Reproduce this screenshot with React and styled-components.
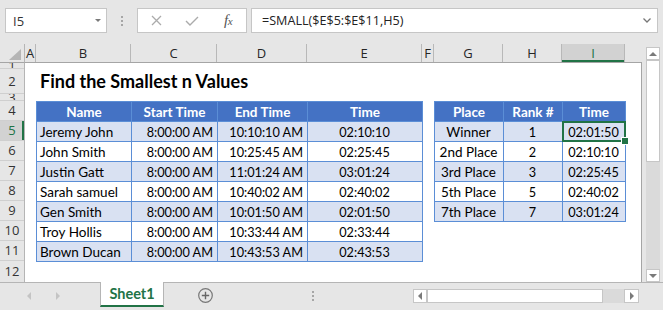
import React from 'react';
import styled, { createGlobalStyle } from 'styled-components';

const GREEN = '#217346';
const BLUE = '#4472C4';
const BAND = '#D9E1F2';
const TBORDER = '#5B8ED6';
const UI = '#e6e6e6';
const LINE = '#c6c6c6';

const Global = createGlobalStyle`
  html, body { margin: 0; padding: 0; background: ${UI}; }
  body { font-family: "Open Sans", "Liberation Sans", sans-serif; }
  * { box-sizing: border-box; }
`;

const Window = styled.div`
  width: 663px;
  height: 310px;
  display: flex;
  flex-direction: column;
  background: ${UI};
  overflow: hidden;
`;

/* ---------- formula bar ---------- */
const FormulaBar = styled.div`
  height: 44px;
  flex: none;
  display: flex;
  align-items: flex-start;
  padding: 8px 5px 0 5px;
`;

const Field = styled.div`
  height: 25px;
  background: #fff;
  border: 1px solid ${LINE};
  display: flex;
  align-items: center;
`;

const NameBox = styled(Field)`
  width: 102px;
  padding: 0 5px 0 7px;
  justify-content: space-between;
  font-size: 13px;
  color: #333;
`;

const Grip = styled.div`
  width: ${p => p.$w || 30}px;
  height: ${p => p.$h || 25}px;
  display: flex;
  flex-direction: column;
  align-items: center;
  justify-content: center;
  gap: 2px;
  flex: none;
  & > span {
    width: 2px;
    height: 2px;
    background: #a6a6a6;
  }
`;

const FxBox = styled(Field)`
  width: 110px;
`;

const IconSlot = styled.div`
  flex: 1;
  display: flex;
  align-items: center;
  justify-content: center;
  height: 100%;
`;

const FxLabel = styled.span`
  font-family: "Liberation Serif", "DejaVu Serif", serif;
  font-style: italic;
  font-size: 15px;
  color: #555;
  letter-spacing: -0.5px;
  & > sub {
    font-size: 11px;
    vertical-align: 0;
  }
`;

const FormulaBox = styled(Field)`
  flex: 1;
  margin-left: 4px;
  padding: 0 6px 0 10px;
  justify-content: space-between;
  font-size: 12.6px;
  color: #222;
`;

/* ---------- sheet ---------- */
const Main = styled.div`
  height: 238px;
  flex: none;
  display: flex;
`;

const Sheet = styled.div`
  width: 642px;
  display: grid;
  grid-template-columns: 25px 617px;
  grid-template-rows: 19px 219px;
`;

const Corner = styled.div`
  border-right: 1px solid #b5b5b5;
  border-bottom: 1px solid #a5a5a5;
  display: flex;
  align-items: flex-end;
  justify-content: flex-end;
  padding: 0 3px 2px 0;
`;

const ColHeaders = styled.div`
  display: flex;
  border-bottom: 1px solid #a5a5a5;
`;

const ColHead = styled.div`
  width: ${p => p.$w}px;
  flex: none;
  border-right: 1px solid #b8b8b8;
  display: flex;
  align-items: center;
  justify-content: center;
  font-size: 13px;
  color: ${p => (p.$sel ? GREEN : '#262626')};
  background: ${p => (p.$sel ? '#d2d2d2' : 'transparent')};
  box-shadow: ${p => (p.$sel ? `inset 0 -2px 0 ${GREEN}` : 'none')};
  &:last-child {
    border-right: none;
  }
`;

const RowHeaders = styled.div`
  display: flex;
  flex-direction: column;
  border-right: 1px solid #b5b5b5;
`;

const RowHead = styled.div`
  height: ${p => p.$h}px;
  flex: none;
  overflow: hidden;
  border-bottom: 1px solid #cfcfcf;
  display: flex;
  align-items: center;
  justify-content: center;
  font-size: 13px;
  line-height: ${p => Math.min(p.$h - 1, 17)}px;
  color: ${p => (p.$sel ? GREEN : '#333')};
  background: ${p => (p.$sel ? '#d2d2d2' : 'transparent')};
  box-shadow: ${p => (p.$sel ? `inset -2px 0 0 ${GREEN}` : 'none')};
  &:last-child {
    border-bottom: none;
  }
`;

const Canvas = styled.div`
  background: #fff;
  border-right: 1px solid #a5a5a5;
  display: grid;
  grid-template-columns: 11px 95px 86px 90px 115px 12px 69px 59px 63px 1fr;
  grid-template-rows: 6px 25px 7px repeat(8, 20px) 1fr;
`;

const Title = styled.h1`
  grid-column: 2 / -1;
  grid-row: 2;
  margin: 0;
  padding: 0 0 0 4px;
  align-self: center;
  font-family: Lato, "Open Sans", sans-serif;
  font-weight: 700;
  font-size: 18px;
  line-height: 25px;
  color: #000;
  white-space: nowrap;
`;

const Table = styled.table`
  grid-column: ${p => p.$cols};
  grid-row: ${p => p.$rows};
  border-collapse: collapse;
  table-layout: fixed;
  width: 100%;
  font-family: Lato, "Open Sans", sans-serif;
  font-size: 12.7px;
  color: #000;
  align-self: start;
  & tr {
    height: 20px;
  }
`;

const HeadCell = styled.th`
  padding: 0 4px;
  background: ${BLUE};
  color: #fff;
  font-weight: 700;
  font-size: 13.5px;
  text-align: center;
  border: 1px solid ${TBORDER};
  white-space: nowrap;
  line-height: 18px;
`;

const Cell = styled.td`
  position: relative;
  padding: 0 4px 0 3px;
  text-align: ${p => p.$align || 'center'};
  background: ${p => (p.$band ? BAND : '#fff')};
  border: 1px solid ${TBORDER};
  white-space: nowrap;
  line-height: 18px;
  font-size: ${p => (p.$text ? '13.5px' : 'inherit')};
  ${p =>
    p.$active &&
    `
    &::after {
      content: '';
      position: absolute;
      inset: -1px;
      border: 2px solid ${GREEN};
      pointer-events: none;
    }
    &::before {
      content: '';
      position: absolute;
      right: -4px;
      bottom: -4px;
      width: 6px;
      height: 6px;
      background: ${GREEN};
      border: 1px solid #fff;
      z-index: 2;
    }
  `}
`;

/* ---------- scrollbars ---------- */
const VScroll = styled.div`
  width: 14px;
  margin: 3px 0 0 4px;
  display: flex;
  flex-direction: column;
`;

const ScrollBtn = styled.div`
  flex: none;
  width: ${p => p.$w || 14}px;
  height: ${p => p.$h || 14}px;
  background: #fff;
  border: 1px solid ${LINE};
  display: flex;
  align-items: center;
  justify-content: center;
`;

const Thumb = styled.div`
  flex: none;
  width: ${p => p.$w || 14}px;
  height: ${p => p.$h || 14}px;
  background: #fff;
  border: 1px solid ${LINE};
`;

const Track = styled.div`
  flex: 1;
  background: #dadada;
`;

const Tri = styled.span`
  width: 0;
  height: 0;
  border-style: solid;
  ${p => {
    const c = p.$c || '#7a7a7a';
    const s = p.$s || 4;
    switch (p.$dir) {
      case 'up':
        return `border-width: 0 ${s}px ${s}px ${s}px; border-color: transparent transparent ${c} transparent;`;
      case 'down':
        return `border-width: ${s}px ${s}px 0 ${s}px; border-color: ${c} transparent transparent transparent;`;
      case 'left':
        return `border-width: ${s}px ${s}px ${s}px 0; border-color: transparent ${c} transparent transparent;`;
      default:
        return `border-width: ${s}px 0 ${s}px ${s}px; border-color: transparent transparent transparent ${c};`;
    }
  }}
`;

/* ---------- tab bar ---------- */
const TabBar = styled.div`
  flex: 1;
  display: flex;
  align-items: flex-start;
  border-top: 1px solid #b5b5b5;
`;

const TabNav = styled.div`
  width: 100px;
  height: 26px;
  display: flex;
  align-items: center;
  padding-left: 27px;
  gap: 25px;
  flex: none;
`;

const SheetTab = styled.div`
  width: 64px;
  height: 25px;
  margin-top: -1px;
  flex: none;
  background: #fff;
  border-left: 1px solid #b5b5b5;
  border-right: 1px solid #b5b5b5;
  border-bottom: 2px solid ${GREEN};
  display: flex;
  align-items: center;
  justify-content: center;
  font-family: Lato, "Open Sans", sans-serif;
  font-weight: 700;
  font-size: 14.5px;
  color: ${GREEN};
`;

const AddBtn = styled.div`
  width: 15px;
  height: 15px;
  margin: 5px 0 0 34px;
  flex: none;
  display: flex;
`;

const HScroll = styled.div`
  margin: 6px 0 0 0;
  height: 14px;
  width: 226px;
  display: flex;
  flex: none;
`;

const timesData = [
  ['Jeremy John', '8:00:00 AM', '10:10:10 AM', '02:10:10'],
  ['John Smith', '8:00:00 AM', '10:25:45 AM', '02:25:45'],
  ['Justin Gatt', '8:00:00 AM', '11:01:24 AM', '03:01:24'],
  ['Sarah samuel', '8:00:00 AM', '10:40:02 AM', '02:40:02'],
  ['Gen Smith', '8:00:00 AM', '10:01:50 AM', '02:01:50'],
  ['Troy Hollis', '8:00:00 AM', '10:33:44 AM', '02:33:44'],
  ['Brown Ducan', '8:00:00 AM', '10:43:53 AM', '02:43:53'],
];

const placeData = [
  ['Winner', '1', '02:01:50'],
  ['2nd Place', '2', '02:10:10'],
  ['3rd Place', '3', '02:25:45'],
  ['5th Place', '5', '02:40:02'],
  ['7th Place', '7', '03:01:24'],
];

const columns = [
  ['A', 11], ['B', 95], ['C', 86], ['D', 90], ['E', 115],
  ['F', 12], ['G', 69], ['H', 59], ['I', 63], ['', 17],
];

const rows = [
  ['1', 6], ['2', 25], ['3', 7], ['4', 20], ['5', 20], ['6', 20], ['7', 20],
  ['8', 20], ['9', 20], ['10', 20], ['11', 20], ['12', 20],
];

export default function App() {
  return (
    <Window>
      <Global />
      <FormulaBar>
        <NameBox>
          <span>I5</span>
          <Tri $dir="down" $s={3.5} $c="#7a7a7a" />
        </NameBox>
        <Grip>
          <span />
          <span />
          <span />
        </Grip>
        <FxBox>
          <IconSlot>
            <svg width="11" height="11" viewBox="0 0 11 11">
              <path d="M1 1 L10 10 M10 1 L1 10" stroke="#ababab" strokeWidth="1.3" fill="none" />
            </svg>
          </IconSlot>
          <IconSlot>
            <svg width="14" height="10" viewBox="0 0 14 10">
              <path d="M1 5 L5 9 L13 1" stroke="#ababab" strokeWidth="1.4" fill="none" />
            </svg>
          </IconSlot>
          <IconSlot>
            <FxLabel>
              f<sub>x</sub>
            </FxLabel>
          </IconSlot>
        </FxBox>
        <FormulaBox>
          <span>=SMALL($E$5:$E$11,H5)</span>
          <svg width="8" height="5" viewBox="0 0 8 5">
            <path d="M0.5 0.5 L4 4 L7.5 0.5" stroke="#777" strokeWidth="1.3" fill="none" />
          </svg>
        </FormulaBox>
      </FormulaBar>

      <Main>
        <Sheet>
          <Corner>
            <svg width="12" height="11" viewBox="0 0 12 11">
              <path d="M12 0 L12 11 L0 11 Z" fill="#b5b5b5" />
            </svg>
          </Corner>
          <ColHeaders>
            {columns.map(([l, w]) => (
              <ColHead key={l || 'rest'} $w={w} $sel={l === 'I'}>
                {l}
              </ColHead>
            ))}
          </ColHeaders>
          <RowHeaders>
            {rows.map(([l, h]) => (
              <RowHead key={l} $h={h} $sel={l === '5'}>
                {l}
              </RowHead>
            ))}
          </RowHeaders>
          <Canvas>
            <Title>Find the Smallest n Values</Title>
            <Table $cols="2 / 6" $rows="4 / 12">
              <colgroup>
                <col style={{ width: 95 }} />
                <col style={{ width: 86 }} />
                <col style={{ width: 90 }} />
                <col style={{ width: 115 }} />
              </colgroup>
              <thead>
                <tr>
                  <HeadCell>Name</HeadCell>
                  <HeadCell>Start Time</HeadCell>
                  <HeadCell>End Time</HeadCell>
                  <HeadCell>Time</HeadCell>
                </tr>
              </thead>
              <tbody>
                {timesData.map((r, i) => (
                  <tr key={r[0]}>
                    <Cell $band={i % 2 === 0} $align="left" $text>{r[0]}</Cell>
                    <Cell $band={i % 2 === 0} $align="right">{r[1]}</Cell>
                    <Cell $band={i % 2 === 0} $align="right">{r[2]}</Cell>
                    <Cell $band={i % 2 === 0}>{r[3]}</Cell>
                  </tr>
                ))}
              </tbody>
            </Table>
            <Table $cols="7 / 10" $rows="4 / 10">
              <colgroup>
                <col style={{ width: 69 }} />
                <col style={{ width: 59 }} />
                <col style={{ width: 63 }} />
              </colgroup>
              <thead>
                <tr>
                  <HeadCell>Place</HeadCell>
                  <HeadCell>Rank #</HeadCell>
                  <HeadCell>Time</HeadCell>
                </tr>
              </thead>
              <tbody>
                {placeData.map((r, i) => (
                  <tr key={r[0]}>
                    <Cell $band={i % 2 === 0} $text>{r[0]}</Cell>
                    <Cell $band={i % 2 === 0}>{r[1]}</Cell>
                    <Cell $band={i % 2 === 0} $active={i === 0}>{r[2]}</Cell>
                  </tr>
                ))}
              </tbody>
            </Table>
          </Canvas>
        </Sheet>
        <VScroll>
          <ScrollBtn $h={13}>
            <Tri $dir="up" $s={4} $c="#7a7a7a" />
          </ScrollBtn>
          <Thumb $h={102} />
          <Track />
          <ScrollBtn $h={13}>
            <Tri $dir="down" $s={4} $c="#7a7a7a" />
          </ScrollBtn>
        </VScroll>
      </Main>

      <TabBar>
        <TabNav>
          <Tri $dir="left" $s={4} $c="#c4c4c4" />
          <Tri $dir="right" $s={4} $c="#c4c4c4" />
        </TabNav>
        <SheetTab>Sheet1</SheetTab>
        <AddBtn>
          <svg width="15" height="15" viewBox="0 0 15 15">
            <circle cx="7.5" cy="7.5" r="6.8" stroke="#777" strokeWidth="1.2" fill="none" />
            <path d="M7.5 3.8 V11.2 M3.8 7.5 H11.2" stroke="#666" strokeWidth="1.4" />
          </svg>
        </AddBtn>
        <Grip $w={200} $h={26}>
          <span />
          <span />
          <span />
        </Grip>
        <HScroll>
          <ScrollBtn $w={14}>
            <Tri $dir="left" $s={4} $c="#7a7a7a" />
          </ScrollBtn>
          <Thumb $w={176} />
          <Track />
          <ScrollBtn $w={15}>
            <Tri $dir="right" $s={4} $c="#7a7a7a" />
          </ScrollBtn>
        </HScroll>
      </TabBar>
    </Window>
  );
}
